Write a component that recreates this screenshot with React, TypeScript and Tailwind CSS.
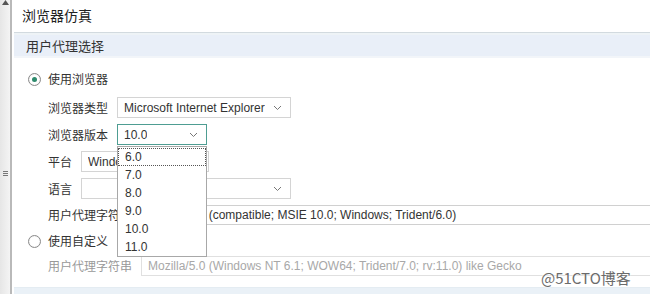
import React from "react";

const cjk = { fontFamily: '"Noto Sans CJK SC", "Liberation Sans", sans-serif' };
const lat = { fontFamily: '"Liberation Sans", Arial, "Noto Sans CJK SC", sans-serif' };

function Chevron({ className = "" }: { className?: string }) {
  return (
    <svg width="9" height="6" viewBox="0 0 9 6" className={className}>
      <path d="M1 1 L4.5 4.5 L8 1" fill="none" stroke="#777" strokeWidth="1" />
    </svg>
  );
}

function Select({ text, w, focus = false }: { text: string; w: string; focus?: boolean }) {
  return (
    <div
      className={`${w} h-[21px] flex items-center justify-between pl-[6px] pr-[8px] bg-white border ${focus ? "border-[#4e9d92]" : "border-[#d4d4d4]"} text-[12px] text-[#333]`}
      style={lat}
    >
      <span className="whitespace-nowrap overflow-hidden">{text}</span>
      <Chevron />
    </div>
  );
}

function Radio({ checked }: { checked?: boolean }) {
  return (
    <div className="w-[13px] h-[13px] rounded-full border border-[#8a8a8a] bg-white flex items-center justify-center shadow-[inset_0_0_1px_#ccc]">
      {checked && <div className="w-[5px] h-[5px] rounded-full bg-[#2d8a6c]" />}
    </div>
  );
}

export default function App() {
  return (
    <div className="w-[650px] h-[294px] overflow-hidden flex bg-white relative" style={cjk}>
      {/* left strip */}
      <div className="w-[12px] h-full flex flex-col items-center bg-gradient-to-r from-[#e6e6e6] to-[#f4f4f4] border-r-2 border-[#b9b9b9] relative">
        <svg width="7" height="5" viewBox="0 0 7 5">
          <path d="M0 5 L3.5 0 L7 5 Z" fill="#555" />
        </svg>
        <div className="mt-[166px] flex flex-col items-center gap-[1px]">
          <div className="w-[5px] h-[1px] bg-[#777]" />
          <div className="w-[5px] h-[1px] bg-[#777]" />
          <div className="w-[5px] h-[1px] bg-[#777]" />
        </div>
      </div>

      {/* content */}
      <div className="flex-1 flex flex-col pl-[2px] relative">
        <div className="h-[32px] pl-[8px] pt-[5px]">
          <div className="text-[14px] leading-[20px] text-[#222]">浏览器仿真</div>
        </div>

        {/* section header */}
        <div className="border-t border-[#d2dadf]">
          <div className="border-t-2 border-[#eef3f6]">
            <div className="h-[21px] bg-[#e9eff8] pl-[12px] flex items-center text-[13px] text-[#333]">用户代理选择</div>
            <div className="h-[2px] bg-[#f2f5f9]" />
          </div>
        </div>

        {/* form */}
        <div className="pl-[14px] pt-[14px] flex flex-col">
          <div className="flex items-center gap-[7px] h-[14px]">
            <Radio checked />
            <span className="text-[12px] text-[#333]">使用浏览器</span>
          </div>

          <div className="pl-[20px] pt-[11px] flex flex-col gap-[6px]">
            <div className="flex items-center gap-[8px]">
              <span className="text-[12px] text-[#333] w-[61px]">浏览器类型</span>
              <Select text="Microsoft Internet Explorer" w="w-[174px]" />
            </div>
            <div className="flex items-center gap-[8px]">
              <span className="text-[12px] text-[#333] w-[61px]">浏览器版本</span>
              <Select text="10.0" w="w-[90px]" focus />
            </div>
            <div className="flex items-center gap-[8px]">
              <span className="text-[12px] text-[#333] w-[25px]">平台</span>
              <Select text="Windows" w="w-[128px]" />
            </div>
            <div className="flex items-center gap-[8px]">
              <span className="text-[12px] text-[#333] w-[25px]">语言</span>
              <Select text="" w="w-[210px]" />
            </div>
            <div className="flex items-center gap-[8px]">
              <span className="text-[12px] text-[#333] w-[85px] whitespace-nowrap">用户代理字符串</span>
              <div
                className="flex-1 h-[20px] border-y border-l border-[#d0d0d0] pl-[6px] flex items-center text-[12px] text-[#333] whitespace-nowrap"
                style={lat}
              >
                Mozilla/5.0 (compatible; MSIE 10.0; Windows; Trident/6.0)
              </div>
            </div>
          </div>

          <div className="flex items-center gap-[7px] h-[14px] mt-[9px]">
            <Radio />
            <span className="text-[12px] text-[#333]">使用自定义</span>
          </div>

          <div className="pl-[20px] pt-[8px] flex items-center gap-[8px]">
            <span className="text-[12px] text-[#999] w-[85px] whitespace-nowrap">用户代理字符串</span>
            <div
              className="flex-1 h-[20px] border-y border-l border-[#e0e0e0] pl-[6px] flex items-center text-[12px] text-[#a8a8a8] whitespace-nowrap"
              style={lat}
            >
              Mozilla/5.0 (Windows NT 6.1; WOW64; Trident/7.0; rv:11.0) like Gecko
            </div>
          </div>
        </div>

        <div className="mt-auto h-[7px] bg-[#eaf1f7] border-t border-[#e4ecf2]" />

        {/* dropdown list overlay */}
        <div
          className="absolute left-[105px] top-[146px] w-[90px] h-[111px] bg-white border border-[#a8a8a8] pt-[1px] text-[12px] text-[#333]"
          style={lat}
        >
          {["6.0", "7.0", "8.0", "9.0", "10.0", "11.0"].map((v, i) => (
            <div
              key={v}
              className={`h-[18px] leading-[16px] pl-[6px] border ${i === 0 ? "border-dotted border-[#555]" : "border-transparent"}`}
            >
              {v}
            </div>
          ))}
        </div>

        {/* watermark */}
        <div
          className="absolute left-[529px] top-[268px] text-[15px] leading-[20px] text-[#6b6b6b] [text-shadow:0_0_2px_#fff,0_0_2px_#fff]"
          style={cjk}
        >
          @51CTO博客
        </div>
      </div>
    </div>
  );
}
